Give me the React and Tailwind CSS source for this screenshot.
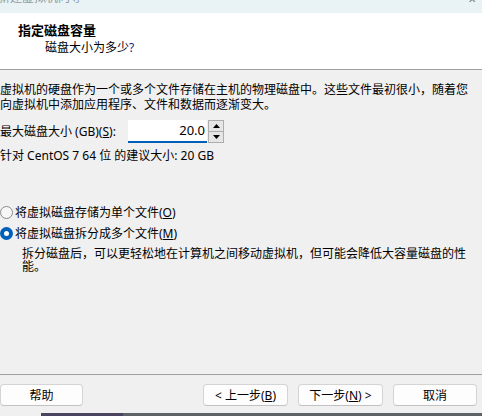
import React from "react";

const font = { fontFamily: '"Noto Sans", "Noto Sans CJK SC", "Microsoft YaHei", sans-serif' };

function Radio({ checked }) {
  return checked ? (
    <span className="w-[13px] h-[13px] rounded-full bg-[#005fb8] flex items-center justify-center shrink-0">
      <span className="w-[5px] h-[5px] rounded-full bg-white" />
    </span>
  ) : (
    <span className="w-[13px] h-[13px] rounded-full border border-[#8a8a8a] bg-[#f7f7f7] shrink-0" />
  );
}

function Btn({ children, className = "" }) {
  return (
    <div
      className={
        "h-[22px] rounded-[4px] border border-[#d4d4d4] border-b-[#c2c2c2] bg-[#fdfdfd] flex items-center justify-center text-[12px] leading-[15px] text-black whitespace-nowrap " +
        className
      }
    >
      {children}
    </div>
  );
}

export default function App() {
  return (
    <div className="w-[482px] h-[416px] bg-[#f0f0f0] overflow-hidden flex flex-col text-black" style={font}>
      {/* title bar */}
      <div className="h-[13px] bg-[#e9f3f6] relative overflow-hidden shrink-0">
        <div className="absolute left-[-2px] top-[-10px] text-[12px] leading-[15px] text-[#8f9aa0] whitespace-nowrap">新建虚拟机向导</div>
        <div className="absolute right-[6px] top-[-7px] text-[10px] leading-[12px] text-[#7a7a7a]">✕</div>
      </div>
      {/* header */}
      <div className="h-[57px] bg-white border-b border-[#a0a0a0] shrink-0 pt-[9px]">
        <div className="pl-[18px] text-[13px] leading-[16px] font-bold">指定磁盘容量</div>
        <div className="pl-[45px] mt-[2px] text-[12px] leading-[15px]">
          磁盘大小为多少<span className="text-[#1a1a8a]">?</span>
        </div>
      </div>
      {/* body */}
      <div className="flex-1 flex flex-col text-[12px] leading-[15px] whitespace-nowrap">
        <div className="mt-[12px]">
          <div>虚拟机的硬盘作为一个或多个文件存储在主机的物理磁盘中。这些文件最初很小，随着您</div>
          <div>向虚拟机中添加应用程序、文件和数据而逐渐变大。</div>
        </div>
        <div className="mt-[8px] flex items-center h-[23px]">
          <span className="w-[128px]">
            最大磁盘大小 (GB)(<span className="underline">S</span>):
          </span>
          <div className="w-[79px] h-[23px] bg-white border-b-2 border-[#005fb8] flex items-center justify-end pr-[2px] text-[13px]">
            20.0
          </div>
          <div className="w-[16px] h-[23px] border border-[#adadad] bg-[#e6e6e6] flex flex-col ml-[1px]">
            <div className="flex-1 flex items-center justify-center border-b border-[#adadad]">
              <svg width="7" height="4" viewBox="0 0 7 4"><path d="M0 4 L3.5 0 L7 4 Z" fill="#000" /></svg>
            </div>
            <div className="flex-1 flex items-center justify-center">
              <svg width="7" height="4" viewBox="0 0 7 4"><path d="M0 0 L3.5 4 L7 0 Z" fill="#000" /></svg>
            </div>
          </div>
        </div>
        <div className="mt-[5px]">针对 CentOS 7 64 位 的建议大小: 20 GB</div>
        <div className="mt-[42px] flex items-center gap-[2px] h-[15px]">
          <Radio />
          <span>
            将虚拟磁盘存储为单个文件(<span className="underline">O</span>)
          </span>
        </div>
        <div className="mt-[6px] flex items-center gap-[2px] h-[15px]">
          <Radio checked />
          <span>
            将虚拟磁盘拆分成多个文件(<span className="underline">M</span>)
          </span>
        </div>
        <div className="mt-[6px] pl-[22px] leading-[13px]">
          <div>拆分磁盘后，可以更轻松地在计算机之间移动虚拟机，但可能会降低大容量磁盘的性</div>
          <div>能。</div>
        </div>
        <div className="flex-1" />
        <div className="border-t border-[#a0a0a0] h-0" />
        <div className="mt-[9px] flex h-[22px]">
          <Btn className="w-[83px]">帮助</Btn>
          <div className="w-[120px]" />
          <Btn className="w-[85px]">
            &lt; 上一步(<span className="underline">B</span>)
          </Btn>
          <Btn className="w-[85px] ml-[10px]">
            下一步(<span className="underline">N</span>) &gt;
          </Btn>
          <Btn className="w-[84px] ml-[10px]">取消</Btn>
        </div>
        <div className="mt-[7px] h-[3px] flex shrink-0">
          <div className="w-[41px] bg-[#f0f0f0]" />
          <div className="w-[82px] bg-[#4a4460]" />
          <div className="flex-1 bg-[#5c6266]" />
        </div>
      </div>
    </div>
  );
}
